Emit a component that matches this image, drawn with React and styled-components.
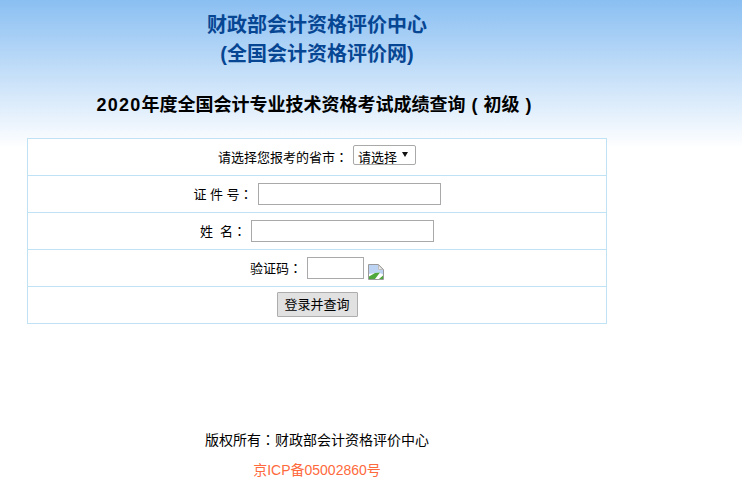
import React from "react";
import styled, { createGlobalStyle } from "styled-components";

const Global = createGlobalStyle`
  html, body { margin: 0; padding: 0; background: #fff; }
  body { font-family: "Liberation Sans", "Noto Sans CJK SC", sans-serif; color: #000; }
`;
const Page = styled.div`
  height: 500px;
  overflow: hidden;
  padding-left: 27px;
  background: linear-gradient(to bottom, #8abff2 0, #ffffff 148px) no-repeat;
`;
const Column = styled.div`
  width: 580px;
`;
const Org = styled.h1`
  margin: 0;
  padding-top: 11px;
  font-size: 20px;
  line-height: 29px;
  font-weight: 700;
  color: #074693;
  text-align: center;
`;
const Heading = styled.h2`
  margin: 14px 0 0;
  height: 55px;
  font-size: 18px;
  line-height: 44px;
  font-weight: 700;
  text-align: center;
`;
const Year = styled.span`
  letter-spacing: 1.2px;
`;
const Paren = styled.span`
  display: inline-block;
  width: 1em;
  text-align: center;
`;
const Punct = styled.span`
  font-family: "Noto Sans CJK TC", sans-serif;
`;
const Form = styled.form`
  box-sizing: border-box;
  width: 580px;
  border: 1px solid #bfe3f5;
  border-bottom: 0;
  background: #fff;
`;
const Row = styled.div`
  box-sizing: border-box;
  height: 37px;
  border-bottom: 1px solid #bfe3f5;
  display: flex;
  align-items: center;
  justify-content: center;
  font-size: 13px;
`;
const Label = styled.label`
  margin-right: 5px;
  margin-top: -2px;
  white-space: pre;
`;
const SelectBox = styled.span`
  position: relative;
  display: inline-flex;
  margin-top: -5px;
`;
const Select = styled.select`
  appearance: none;
  box-sizing: border-box;
  width: 63px;
  height: 20px;
  padding: 4px 0 0 4px;
  border: 1px solid #a9a9a9;
  border-radius: 2px;
  background: #fff;
  font: 13px "Liberation Sans", "Noto Sans CJK SC", sans-serif;
  color: #000;
`;
const Arrow = styled.span`
  position: absolute;
  right: 8px;
  top: 7px;
  width: 0;
  height: 0;
  border-left: 3px solid transparent;
  border-right: 3px solid transparent;
  border-top: 5px solid #111;
  pointer-events: none;
`;
const Field = styled.input`
  box-sizing: border-box;
  width: ${p => p.$w}px;
  height: 22px;
  padding: 0 2px;
  border: 1px solid #a9a9a9;
  background: #fff;
  outline: none;
`;
const BrokenImage = styled.svg`
  width: 16px;
  height: 16px;
  margin-left: 4px;
  margin-top: 7px;
  flex: none;
`;
const Submit = styled.button`
  box-sizing: border-box;
  width: 81px;
  height: 25px;
  padding: 0 0 2px;
  border: 1px solid #adadad;
  border-radius: 1px;
  background: #e1e1e1;
  font: 13px "Liberation Sans", "Noto Sans CJK SC", sans-serif;
  color: #000;
  margin-top: -1px;
`;
const Footer = styled.footer`
  margin-top: 99px;
  text-align: center;
`;
const Copyright = styled.p`
  margin: 0;
  font-size: 14px;
  line-height: 32px;
`;
const Record = styled.a`
  display: block;
  font-size: 14px;
  line-height: 28px;
  color: #ff6a3c;
  text-decoration: none;
`;

export default function App() {
  return (
    <>
      <Global />
      <Page>
        <Column>
          <Org>财政部会计资格评价中心<br />(全国会计资格评价网)</Org>
          <Heading><Year>2020</Year>年度全国会计专业技术资格考试成绩查询<Paren>(</Paren>初级<Paren>)</Paren></Heading>
          <Form onSubmit={e => e.preventDefault()}>
            <Row>
              <Label>请选择您报考的省市<Punct>：</Punct></Label>
              <SelectBox>
                <Select defaultValue="">
                  <option value="">请选择</option>
                </Select>
                <Arrow />
              </SelectBox>
            </Row>
            <Row>
              <Label>证 件 号<Punct>：</Punct></Label>
              <Field $w={183} type="text" />
            </Row>
            <Row>
              <Label>姓  名<Punct>：</Punct></Label>
              <Field $w={183} type="text" />
            </Row>
            <Row>
              <Label>验证码<Punct>：</Punct></Label>
              <Field $w={57} type="text" />
              <BrokenImage viewBox="0 0 16 16">
                <path d="M0.5 0.5H10.5L15.5 5.5V15.5H0.5Z" fill="#fff" stroke="#9a9a9a" />
                <path d="M1 1H10V6H15V10.5L11 8.5L1 10Z" fill="#bcd3f3" />
                <path d="M10.5 1L15 5.5H10.5Z" fill="#e8e8e8" stroke="#9a9a9a" strokeWidth=".6" />
                <path d="M1 15V12.5L7 9L12 8.5L7 15Z" fill="#4fa83c" />
                <path d="M11 15L15 11.5V15Z" fill="#4fa83c" />
              </BrokenImage>
            </Row>
            <Row>
              <Submit type="submit">登录并查询</Submit>
            </Row>
          </Form>
          <Footer>
            <Copyright>版权所有<Punct>：</Punct>财政部会计资格评价中心</Copyright>
            <Record href="#">京ICP备05002860号</Record>
          </Footer>
        </Column>
      </Page>
    </>
  );
}
